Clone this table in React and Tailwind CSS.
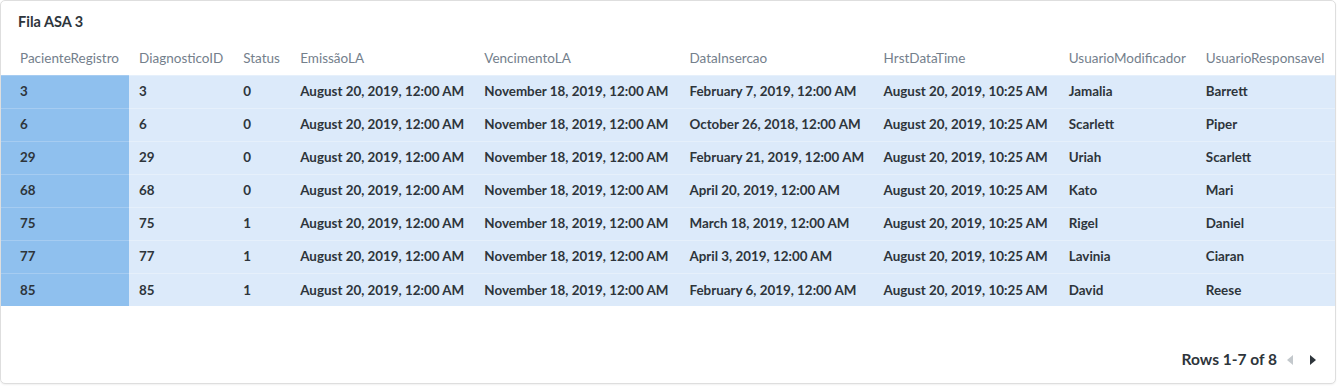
import React from 'react';

const cols = [
  { key: 'pr', label: 'PacienteRegistro', w: 128, first: true },
  { key: 'di', label: 'DiagnosticoID', w: 104 },
  { key: 'st', label: 'Status', w: 57 },
  { key: 'em', label: 'EmissãoLA', w: 184 },
  { key: 've', label: 'VencimentoLA', w: 205 },
  { key: 'da', label: 'DataInsercao', w: 194 },
  { key: 'hr', label: 'HrstDataTime', w: 185 },
  { key: 'um', label: 'UsuarioModificador', w: 137 },
  { key: 'ur', label: 'UsuarioResponsavel', w: 139 },
];

const EM = 'August 20, 2019, 12:00 AM';
const VE = 'November 18, 2019, 12:00 AM';
const HR = 'August 20, 2019, 10:25 AM';

const rows = [
  ['3', '3', '0', EM, VE, 'February 7, 2019, 12:00 AM', HR, 'Jamalia', 'Barrett'],
  ['6', '6', '0', EM, VE, 'October 26, 2018, 12:00 AM', HR, 'Scarlett', 'Piper'],
  ['29', '29', '0', EM, VE, 'February 21, 2019, 12:00 AM', HR, 'Uriah', 'Scarlett'],
  ['68', '68', '0', EM, VE, 'April 20, 2019, 12:00 AM', HR, 'Kato', 'Mari'],
  ['75', '75', '1', EM, VE, 'March 18, 2019, 12:00 AM', HR, 'Rigel', 'Daniel'],
  ['77', '77', '1', EM, VE, 'April 3, 2019, 12:00 AM', HR, 'Lavinia', 'Ciaran'],
  ['85', '85', '1', EM, VE, 'February 6, 2019, 12:00 AM', HR, 'David', 'Reese'],
];

export default function App() {
  return (
    <div className="w-[1338px] h-[388px] bg-white font-['Lato','Noto_Sans',sans-serif]">
      {/* cartão da tabela */}
      <div className="flex flex-col w-[1336px] h-[384px] border border-[#dedede] rounded-[5px] shadow-[0_1px_2px_rgba(0,0,0,0.06)] overflow-hidden bg-white">
        <div className="h-[41px] pl-[17px] pt-[11px] text-[14.5px] font-bold text-[#2e353b] leading-[20px]">
          Fila ASA 3
        </div>

        <table className="table-fixed border-collapse w-[1334px]">
          <colgroup>
            {cols.map((c) => (
              <col key={c.key} style={{ width: c.w }} />
            ))}
          </colgroup>
          <thead>
            <tr className="h-[33px]">
              {cols.map((c) => (
                <th
                  key={c.key}
                  className={`text-left font-normal text-[13.5px] text-[#74808c] whitespace-nowrap ${
                    c.first ? 'pl-[19px]' : 'pl-[10px]'
                  }`}
                >
                  {c.label}
                </th>
              ))}
            </tr>
          </thead>
          <tbody>
            {rows.map((r, i) => (
              <tr key={i} className="h-[33px]">
                {r.map((v, j) => (
                  <td
                    key={j}
                    className={`text-[13.4px] font-bold text-[#2e353b] whitespace-nowrap border-t ${
                      j === 0
                        ? 'pl-[19px] bg-[#8fc0ee] border-[#a6ccf1]'
                        : 'pl-[10px] bg-[#dceafa] border-[#e6f0fb]'
                    }`}
                  >
                    {v}
                  </td>
                ))}
              </tr>
            ))}
          </tbody>
        </table>

        <div className="flex-1" />

        <div className="flex items-center justify-end h-[44px] pr-[13px] pb-[2px]">
          <span className="text-[15.5px] font-bold text-[#2e353b] mr-[4px]">Rows 1-7 of 8</span>
          <svg width="20" height="12" viewBox="0 0 20 12" className="mr-[1px]">
            <path d="M12 1 L6 6 L12 11 Z" fill="#c3c8cc" />
          </svg>
          <svg width="20" height="12" viewBox="0 0 20 12">
            <path d="M8 1 L14 6 L8 11 Z" fill="#2e353b" />
          </svg>
        </div>
      </div>
    </div>
  );
}
